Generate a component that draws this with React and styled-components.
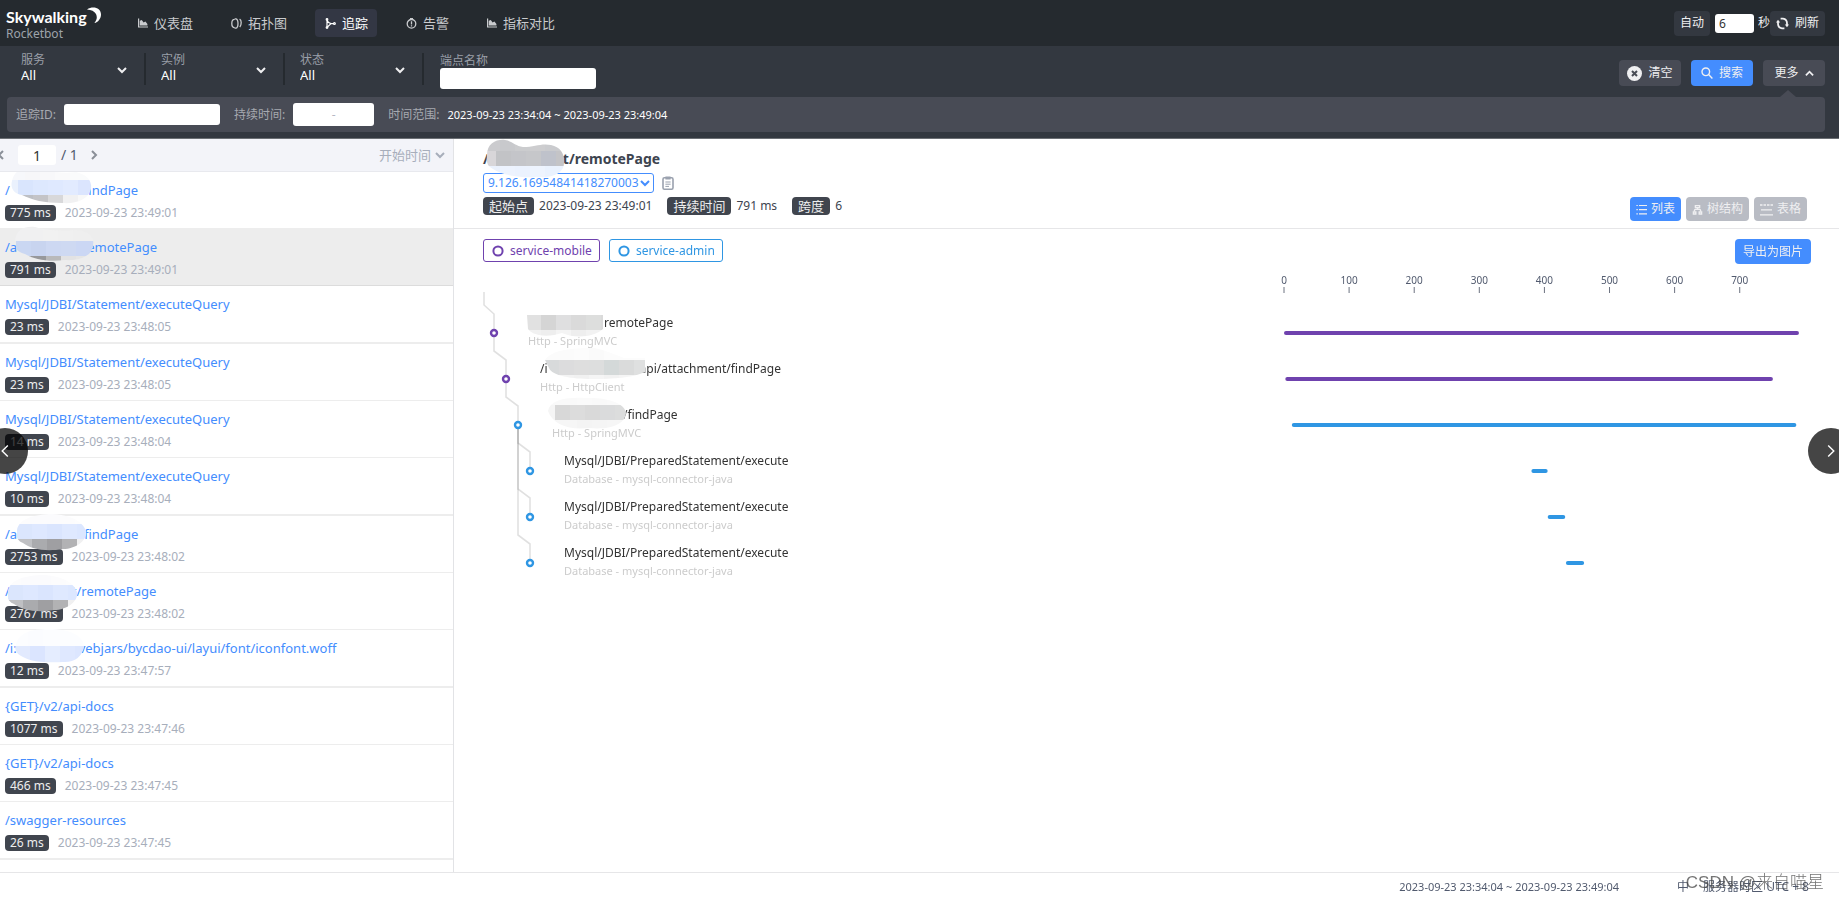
import { useState } from "react";
import styled, { createGlobalStyle, css } from "styled-components";

const GlobalStyle = createGlobalStyle`
  * {
    box-sizing: border-box;
  }

  body {
    margin: 0;
    background: #fff;
    color: #3d444f;
    font: 12px/18px "Noto Sans", "Noto Sans CJK SC", sans-serif;
  }

  button, input, select {
    margin: 0;
    padding: 0;
    border: 0;
    outline: 0;
    font: inherit;
    color: inherit;
  }

  button {
    cursor: pointer;
  }

  a {
    color: inherit;
    text-decoration: none;
  }
`;

const Page = styled.div`
  display: flex;
  flex-direction: column;
  height: 100vh;
  overflow: hidden;
`;

const Icon = styled.svg`
  display: block;
  flex: none;
  width: ${(props) => props.$size || 12}px;
  height: ${(props) => props.$size || 12}px;
`;

/* header */

const Header = styled.header`
  display: flex;
  flex: none;
  align-items: center;
  height: 46px;
  padding: 0 14px 0 6px;
  background-color: #252a2f;
  color: #efeff1;
`;

const Brand = styled.a`
  display: flex;
  flex-direction: column;
  width: 122px;

  & .name {
    display: flex;
    align-items: flex-start;
    font: bold 16px/20px Lato, sans-serif;
    color: #fff;
  }

  & .sub {
    font-size: 12px;
    line-height: 13px;
    color: #9da3aa;
  }
`;

const Nav = styled.nav`
  display: flex;
  flex: 1;
  gap: 19px;
`;

const NavLink = styled.a`
  display: flex;
  align-items: center;
  gap: 6px;
  height: 28px;
  padding: 0 9px 0 10px;
  border-radius: 4px;
  font-size: 13px;
  color: ${(props) => (props.$active ? "#fff" : "#c9cbce")};
  background-color: ${(props) => (props.$active ? "#333744" : "transparent")};
`;

const Refresh = styled.div`
  display: flex;
  align-items: center;
  font-size: 12px;

  & label {
    display: flex;
    align-items: center;
    gap: 4px;
    margin-left: 5px;
  }

  & input {
    width: 39px;
    height: 19px;
    padding: 0 4px;
    border-radius: 3px;
    background: #fff;
    color: #333;
  }
`;

const Button = styled.button`
  display: flex;
  align-items: center;
  justify-content: center;
  gap: 6px;
  height: 26px;
  padding: 0 8px;
  border-radius: 4px;
  font-size: 12px;
  color: #efeff1;
  background-color: #484b55;

  ${(props) =>
    props.$dark &&
    css`
      height: 25px;
      padding: 0 6px;
      background-color: #333840;
    `}

  ${(props) =>
    props.$primary &&
    css`
      background-color: #448dfe;
    `}
`;

/* search conditions */

const Conditions = styled.section`
  flex: none;
  padding: 7px 14px 6px 7px;
  border-bottom: 1px solid #6b6f74;
  background-color: #333840;
  color: #efeff1;
`;

const ConditionRow = styled.div`
  display: flex;
  align-items: flex-start;
`;

const SelectField = styled.label`
  position: relative;
  display: flex;
  flex-direction: column;
  width: 139px;
  height: 32px;
  padding-left: 14px;
  border-right: 2px solid #252a2f;
  line-height: 14px;
  color: #9a9fa8;

  & + & {
    padding-left: 15px;
  }

  & select {
    appearance: none;
    width: 100%;
    height: 17px;
    background: none;
    font-size: 13px;
    line-height: 17px;
    color: #fff;
  }

  & svg {
    position: absolute;
    top: 12px;
    right: 17px;
    color: #efeff1;
    pointer-events: none;
  }
`;

const EndpointField = styled.label`
  display: flex;
  flex: 1;
  flex-direction: column;
  align-items: flex-start;
  padding-left: 16px;
  line-height: 15px;
  color: #9a9fa8;
`;

const TextBox = styled.input`
  width: 156px;
  height: 21px;
  padding: 0 6px;
  border-radius: 3px;
  background: #fff;
  color: #333;
`;

const Actions = styled.div`
  display: flex;
  gap: 10px;
  padding-top: 7px;

  & ${Button} {
    width: 62px;
  }
`;

const MorePanel = styled.div`
  position: relative;
  display: flex;
  align-items: center;
  height: 35px;
  margin-top: 8px;
  padding: 0 9px;
  border-radius: 4px;
  background-color: #484b55;
  color: #a6a9b0;

  &::before {
    content: "";
    position: absolute;
    top: -7px;
    right: 29px;
    border: solid transparent;
    border-width: 0 8px 7px;
    border-bottom-color: #484b55;
  }

  & label,
  & .range {
    display: flex;
    align-items: center;
    gap: 8px;
    margin-right: 14px;
  }

  & time {
    font-size: 11px;
    color: #fff;
  }
`;

const Duration = styled.span`
  display: flex;
  align-items: center;
  width: 81px;
  height: 23px;
  border-radius: 3px;
  background: #fff;
  color: #b5b8c4;

  & input {
    flex: 1;
    min-width: 0;
    padding: 0 4px;
    background: none;
    color: #333;
  }
`;

/* trace list */

const Main = styled.main`
  display: flex;
  flex: 1;
  min-height: 0;
`;

const Aside = styled.aside`
  display: flex;
  flex: none;
  flex-direction: column;
  width: 454px;
  border-right: 1px solid #e2e3e6;
`;

const Pager = styled.div`
  display: flex;
  flex: none;
  align-items: center;
  justify-content: space-between;
  height: 33px;
  padding-right: 8px;
  border-bottom: 1px solid #e8e9ee;
  background-color: #f3f4f9;
  color: #515a6e;
  font-size: 13px;

  & .pages {
    display: flex;
    align-items: center;
    gap: 5px;
    font-size: 14px;
  }

  & button {
    display: flex;
    width: 12px;
    background: none;
    color: #8a8f98;
  }

  & .prev {
    width: 17px;
    margin-left: -4px;
  }

  & .next {
    margin-left: 6px;
  }

  & input {
    width: 38px;
    height: 20px;
    border-radius: 3px;
    background: #fff;
    text-align: center;
    color: #333;
  }
`;

const SortField = styled.label`
  display: flex;
  align-items: center;
  gap: 3px;
  color: #a7aebb;

  & select {
    appearance: none;
    background: none;
  }
`;

const TraceList = styled.ul`
  flex: 1;
  min-height: 0;
  margin: 0;
  padding: 0;
  overflow-y: auto;
  scrollbar-width: none;
  list-style: none;
`;

const TraceItem = styled.li`
  padding: 8px 5px 7px;
  border-bottom: 1px solid ${(props) => (props.$active ? "#dcdcdc" : "#ededed")};
  background-color: ${(props) => (props.$active ? "#ededed" : "#fff")};

  &:nth-child(3n) {
    border-bottom-width: 2px;
  }
`;

const TraceName = styled.a`
  display: flex;
  height: 25px;
  font-size: 13px;
  line-height: 20px;
  color: #448dfe;
`;

const TraceMeta = styled.div`
  display: flex;
  align-items: center;
  gap: 9px;
  height: 16px;
  color: #a7aebb;
`;

const Tag = styled.span`
  padding: 0 5px;
  border-radius: 4px;
  line-height: 16px;
  color: #eee;
  background-color: #40454e;

  ${(props) =>
    props.$large &&
    css`
      padding: 0 6px;
      font-size: 13px;
      line-height: 18px;
    `}
`;

const Hidden = styled.span`
  position: relative;
  flex: none;
  width: ${(props) => props.$width}px;

  & svg {
    position: absolute;
    z-index: 1;
    top: ${(props) => props.$top}px;
    left: ${(props) => props.$left}px;
  }
`;

/* trace detail */

const Detail = styled.section`
  flex: 1;
  min-width: 0;
`;

const DetailHeader = styled.div`
  display: flex;
  align-items: flex-end;
  justify-content: space-between;
  padding: 10px 32px 7px 29px;
  border-bottom: 1px solid #e6e6e8;
`;

const DetailTitle = styled.h1`
  display: flex;
  margin: 0;
  font-size: 14px;
  font-weight: bold;
  line-height: 20px;
`;

const TraceIdRow = styled.div`
  display: flex;
  align-items: center;
  gap: 7px;
  margin: 4px 0;
`;

const TraceIdSelect = styled.label`
  position: relative;
  display: flex;

  & select {
    appearance: none;
    height: 20px;
    padding: 0 14px 0 4px;
    border: 1px solid #448dfe;
    border-radius: 3px;
    background: #fff;
    color: #448dfe;
  }

  & svg {
    position: absolute;
    top: 5px;
    right: 4px;
    pointer-events: none;
    color: #448dfe;
  }
`;

const Facts = styled.div`
  display: flex;
  gap: 15px;
  margin-bottom: 6px;

  & > div {
    display: flex;
    gap: 5px;
  }
`;

const Views = styled.div`
  display: flex;
  gap: 5px;
`;

const ViewButton = styled(Button)`
  gap: 4px;
  height: 24px;
  padding: 0 6px;
  background-color: ${(props) => (props.$active ? "#448dfe" : "#b9bcc4")};
`;

const Legend = styled.div`
  display: flex;
  gap: 9px;
  padding: 10px 28px 0 29px;

  & .export {
    height: 25px;
    margin-left: auto;
  }
`;

const ServiceChip = styled.span`
  display: flex;
  align-items: center;
  gap: 6px;
  height: 23px;
  padding: 0 7px 0 8px;
  border: 1px solid;
  border-radius: 3px;
  color: ${(props) => props.$color};
`;

const Chart = styled.div`
  position: relative;
  display: grid;
  grid-template-columns: 14fr 9fr;
  padding: 0 40px 0 29px;
`;

const TreeLines = styled.svg`
  position: absolute;
  top: 0;
  left: 29px;
  width: 60px;
  height: 330px;
`;

const SpanList = styled.ol`
  margin: 0;
  padding: 46px 0 0;
  list-style: none;
`;

const SpanItem = styled.li`
  height: 46px;
  padding-top: 4px;
  padding-left: ${(props) => 45 + props.$depth * 12}px;

  & .label {
    display: flex;
    color: #333;
  }

  & .layer {
    font-size: 11px;
    color: #ccc;
  }
`;

const Timeline = styled.svg`
  display: block;
  width: 100%;
  height: 330px;
  overflow: visible;
  font-size: 10px;
  fill: #515a6e;
`;

const Footer = styled.footer`
  display: flex;
  flex: none;
  align-items: center;
  justify-content: flex-end;
  height: 28px;
  padding-right: 30px;
  border-top: 1px solid #e6e6e8;
  color: #515a6e;

  & time {
    font-size: 11px;
  }

  & .lang {
    margin: 0 14px 0 58px;
    background: none;
  }
`;

const Watermark = styled.div`
  position: fixed;
  right: 15px;
  bottom: 8px;
  font-family: "Liberation Sans", "Noto Sans CJK SC", sans-serif;
  font-size: 17px;
  font-weight: 300;
  color: rgba(70, 70, 70, 0.75);
  pointer-events: none;
`;

const SlideButton = styled.button`
  position: fixed;
  z-index: 2;
  top: 50%;
  ${(props) => (props.$side === "left" ? "left: -18px" : "right: -15px")};
  display: flex;
  align-items: center;
  justify-content: center;
  width: 46px;
  height: 46px;
  margin-top: -22px;
  border-radius: 50%;
  background-color: rgba(0, 0, 0, 0.73);
  color: #fff;
`;

const PURPLE = "#6f42ae";
const BLUE = "#2f96e3";
const ROW = 46;
const TOTAL = 791;

// Each cover is a blob outline over horizontal bands of 15px tiles.
const covers = {
  light: {
    width: 82,
    height: 37,
    shape: "M2 14C4 4 12 0 22 1C38 4 52 7 66 5C78 8 82 14 81 22C78 33 66 37 52 36C34 36 22 33 12 28C4 27 0 21 2 14Z",
    bands: [
      [0, 13, 0, ["#f7f8fb", "#f7f7f9", "#f8f8fa", "#fafafb", "#fafbfc", "#fafbfc"]],
      [13, 15, 0, ["#eaf1fd"], 8],
      [13, 15, 8, ["#d9e5fd", "#dde8fe", "#dfe9ff", "#e2ebff", "#dbe5fe"]],
      [28, 9, 8, ["#bdbfc4", "#c4c4c7", "#d8d8da", "#f1f1f2", "#f8f8f8"]],
    ],
  },
  active: {
    width: 82,
    height: 36,
    shape: "M2 14C4 3 12 0 22 1C34 5 50 5 62 4C74 4 82 10 80 19C80 30 66 35 52 34C36 36 22 34 12 28C4 26 1 22 2 14Z",
    bands: [
      [0, 15, 0, ["#f0f0f1", "#f0f0f1", "#f1f1f1", "#f0f0f0", "#efefef", "#efefef"]],
      [15, 15, 3, ["#cad7f2", "#c8d4ef", "#cdd8f2", "#ced9f2", "#cbd7f4", "#ccd8f4"]],
      [30, 6, 3, ["#a7a8ac", "#97989b", "#b9b9ba", "#e2e2e3", "#e5e5e5", "#e5e5e5"]],
    ],
  },
  dim: {
    width: 74,
    height: 38,
    shape: "M2 17C4 6 18 2 34 1C54 1 68 8 71 18C73 26 62 36 48 36C30 39 16 36 8 30C2 28 0 22 2 17Z",
    bands: [
      [0, 11, 0, ["#fcfcfd", "#fbfbfd", "#fbfbfd", "#fcfcfd", "#fdfdfd"]],
      [11, 15, 2, ["#dbe6fd", "#dee8ff", "#dae5fe", "#dfe9ff", "#dce7ff"]],
      [26, 12, 2, ["#bfc0c3", "#aaabae", "#9f9fa2", "#b2b2b4", "#f0f0f1"]],
    ],
  },
  pale: {
    width: 74,
    height: 34,
    shape: "M3 15C6 4 18 0 36 0C56 0 70 6 71 17C70 28 60 34 50 33C36 34 18 33 10 28C3 25 1 20 3 15Z",
    bands: [
      [0, 17, 0, ["#fcfdff", "#fbfcff", "#fcfdff", "#fcfdff", "#fcfdff"]],
      [17, 17, 2, ["#e2eafe", "#dbe5ff", "#e5edff", "#dfe8ff", "#dce6ff"]],
    ],
  },
  title: {
    width: 80,
    height: 40,
    shape: "M2 16C2 4 12 0 20 1C27 2 30 7 38 8C50 8 56 4 66 6C76 8 80 16 79 24C79 34 68 39 54 38C38 39 18 37 8 30C2 27 1 22 2 16Z",
    bands: [
      [0, 12, 0, ["#cbcbce", "#c8c9cc", "#cbccce", "#cdcdcf", "#cacbce", "#cacbce"]],
      [12, 15, 11, ["#c2c3c6", "#c4c5c9", "#c6c7ca", "#bfc2cb", "#c4c4c7"]],
      [12, 15, 0, ["#d8d6d9"], 11],
      [27, 13, 0, ["#eaf1fd", "#edf3fe", "#ebf2fe", "#eef4fe", "#eaf2fe", "#ecf3ff"]],
    ],
  },
  gray: {
    width: 78,
    height: 22,
    shape: "M1 0H77V14C68 22 50 24 36 18C24 22 8 22 2 14Z",
    bands: [
      [0, 15, 0, ["#e1e1e1", "#d5d5d5", "#dfdfe0", "#dadada", "#dddedd", "#dadada"]],
      [15, 7, 0, ["#f1f1f1", "#eeeeee", "#f4f4f4", "#eeeeee", "#f2f2f2", "#f5f5f5"]],
    ],
  },
  wide: {
    width: 102,
    height: 32,
    shape: "M1 12C8 2 26 0 50 0C60 2 70 6 80 10H101V24C88 30 70 31 48 31C28 31 8 28 5 20Z",
    bands: [
      [0, 12, 0, ["#fbfbfb", "#fbfbfb", "#fcfcfc", "#fafafa", "#fcfcfc", "#fcfcfc", "#fcfcfc"]],
      [12, 15, 0, ["#d8dadb", "#dcdcdd", "#dedede", "#dddede", "#d4d9d9", "#dadbdb", "#dfe0e0"]],
      [27, 5, 0, ["#f3f3f3", "#f3f3f3", "#f1f1f1", "#f5f5f5", "#f2f2f2", "#f5f5f5", "#f5f5f5"]],
    ],
  },
  soft: {
    width: 80,
    height: 33,
    shape: "M1 14C3 4 16 0 38 1C60 0 78 6 79 16C78 28 62 33 42 31C22 33 6 28 1 14Z",
    bands: [
      [0, 8, 0, ["#f9f9f9", "#f9f9f9", "#fafafa", "#f9f9f9", "#fafafa", "#fafafa"]],
      [8, 15, 0, ["#f5f5f5"], 8],
      [8, 15, 8, ["#d8d8d8", "#dcdcdc", "#d9d9d9", "#dadbdc", "#dcdddd"]],
      [23, 10, 0, ["#f6f6f6", "#f6f6f6", "#f4f4f4", "#f5f5f5", "#f6f6f6", "#f7f7f7"]],
    ],
  },
};

const traces = [
  { start: "/", end: "findPage", cover: "light", gap: 74, top: -13, left: 0, ms: 775, time: "23:49:01" },
  { start: "/a", end: "emotePage", cover: "active", gap: 70, top: -11, left: -4, ms: 791, time: "23:49:01", active: true },
  { start: "Mysql/JDBI/Statement/executeQuery", ms: 23, time: "23:48:05" },
  { start: "Mysql/JDBI/Statement/executeQuery", ms: 23, time: "23:48:05" },
  { start: "Mysql/JDBI/Statement/executeQuery", ms: 14, time: "23:48:04" },
  { start: "Mysql/JDBI/Statement/executeQuery", ms: 10, time: "23:48:04" },
  { start: "/a", end: "/findPage", cover: "dim", gap: 62, top: -11, left: -2, ms: 2753, time: "23:48:02" },
  { start: "/", end: "t/remotePage", cover: "dim", gap: 62, top: -7, left: -4, ms: 2767, time: "23:48:02" },
  { start: "/i:", end: "vebjars/bycdao-ui/layui/font/iconfont.woff", cover: "pale", gap: 62, top: -9, left: -4, ms: 12, time: "23:47:57" },
  { start: "{GET}/v2/api-docs", ms: 1077, time: "23:47:46" },
  { start: "{GET}/v2/api-docs", ms: 466, time: "23:47:45" },
  { start: "/swagger-resources", ms: 26, time: "23:47:45" },
  { start: "/swagger-resources", ms: 18, time: "23:47:45" },
];

const spans = [
  { end: "remotePage", cover: "gray", gap: 76, top: 1, left: -2, layer: "Http - SpringMVC", depth: 0, parent: -1, from: 0, to: 791, color: PURPLE },
  { start: "/i", end: "api/attachment/findPage", cover: "wide", gap: 92, top: -12, left: -4, layer: "Http - HttpClient", depth: 1, parent: 0, from: 2, to: 751, color: PURPLE },
  { end: "/findPage", cover: "soft", gap: 71, top: -9, left: -5, layer: "Http - SpringMVC", depth: 2, parent: 1, from: 12, to: 787, color: BLUE },
  { start: "Mysql/JDBI/PreparedStatement/execute", layer: "Database - mysql-connector-java", depth: 3, parent: 2, from: 380, to: 405, color: BLUE },
  { start: "Mysql/JDBI/PreparedStatement/execute", layer: "Database - mysql-connector-java", depth: 3, parent: 2, from: 405, to: 432, color: BLUE },
  { start: "Mysql/JDBI/PreparedStatement/execute", layer: "Database - mysql-connector-java", depth: 3, parent: 2, from: 433, to: 461, color: BLUE },
];

const Chevron = ({ dir = "down", size = 10, width = 2 }) => {
  const paths = {
    down: "M1 3L5 7L9 3",
    up: "M1 7L5 3L9 7",
    left: "M7 1L3 5L7 9",
    right: "M3 1L7 5L3 9",
  };
  return (
    <Icon $size={size} viewBox="0 0 10 10" fill="none" stroke="currentColor" strokeWidth={width} aria-hidden="true">
      <path d={paths[dir]} />
    </Icon>
  );
};

const ChartIcon = () => (
  <Icon $size={10} viewBox="0 0 10 10" fill="currentColor" aria-hidden="true">
    <path d="M0 .6H1.2V8.4H10V9.6H0ZM1.8 7.6V2.8L3.8 2L5.6 4.4L7.4 3.6L9.4 6V7.6Z" />
  </Icon>
);

const TopologyIcon = () => (
  <Icon $size={11} viewBox="0 0 11 11" fill="none" stroke="currentColor" strokeWidth="1.3" aria-hidden="true">
    <path d="M3.6 1.4Q.8 1.4 .8 5.5Q.8 9.6 3.6 9.6M3.6 .8H5Q7 1.4 7 5.5Q7 9.6 5 10.2H3.6M8.6 1.2Q10.2 2 10.2 4.6Q10.2 7.4 8.8 9" />
  </Icon>
);

const TraceIcon = () => (
  <Icon $size={11} viewBox="0 0 11 11" fill="none" stroke="currentColor" strokeWidth="1.2" aria-hidden="true">
    <path d="M2 1.6V9.4M2.4 9L6 5.6M2.2 2.4Q3 5 6 5.6H8.6" />
    <circle cx="2" cy="1.4" r=".8" />
    <circle cx="2" cy="9.6" r=".8" />
    <circle cx="9.4" cy="5.6" r=".9" />
  </Icon>
);

const AlarmIcon = () => (
  <Icon $size={11} viewBox="0 0 11 11" fill="none" stroke="currentColor" strokeWidth="1.3" aria-hidden="true">
    <circle cx="5.5" cy="5.8" r="4.3" />
    <path d="M5.5 3.2V6.4M5.5 7.3V8.5M4 .7H7" />
  </Icon>
);

const ReloadIcon = () => (
  <Icon $size={13} viewBox="0 0 13 13" fill="none" stroke="currentColor" strokeWidth="1.8" aria-hidden="true">
    <path d="M4.6 1.7H7Q11 2.2 11 6.5V8M8.4 11.3H6Q2 10.8 2 6.5V5" />
    <path d="M8.8 7.4H13L11 10.2ZM0 5.6H4.2L2 2.8Z" fill="currentColor" stroke="none" />
  </Icon>
);

const ClearIcon = () => (
  <Icon $size={15} viewBox="0 0 15 15" aria-hidden="true">
    <circle cx="7.5" cy="7.5" r="7.5" fill="#efeff1" />
    <path d="M5 5L10 10M10 5L5 10" stroke="#484b55" strokeWidth="2" />
  </Icon>
);

const SearchIcon = () => (
  <Icon $size={12} viewBox="0 0 12 12" fill="none" stroke="currentColor" strokeWidth="1.4" aria-hidden="true">
    <circle cx="4.8" cy="4.8" r="3.8" />
    <path d="M7.6 7.6L11.4 11.4" />
  </Icon>
);

const ClipboardIcon = () => (
  <Icon $size={14} viewBox="0 0 14 14" fill="none" stroke="#9aa1ae" strokeWidth="1.6" aria-hidden="true">
    <rect x="2" y="1.8" width="10" height="11.4" rx="1.4" />
    <path d="M4.4 2H9.6" strokeWidth="3" />
    <path d="M4.4 6H9.6M4.4 8.2H9.6M4.4 10.4H8" strokeWidth="1" />
  </Icon>
);

const ListIcon = () => (
  <Icon $size={11} viewBox="0 0 11 11" fill="none" stroke="currentColor" strokeWidth="1.2" aria-hidden="true">
    <path d="M3 1.5H11M3 5.7H11M3 9.9H11M.4 1.5H1.8M.4 5.7H1.8M.4 9.9H1.8" />
  </Icon>
);

const TreeIcon = () => (
  <Icon $size={11} viewBox="0 0 11 11" fill="none" stroke="currentColor" strokeWidth="1.4" aria-hidden="true">
    <path d="M3.4 1.6H7.6V3.6H3.4ZM5.5 4V5.6M2.4 7.6V6.4Q2.4 5.4 3.6 5.4H7.4Q8.6 5.4 8.6 6.4V7.6" />
    <path d="M1.4 8H3.8V10H1.4ZM7.2 8H9.6V10H7.2Z" />
  </Icon>
);

const TableIcon = () => (
  <Icon $size={13} viewBox="0 0 13 13" fill="none" stroke="currentColor" strokeWidth="1.3" aria-hidden="true">
    <path d="M0 2H13" strokeDasharray="2.5 1" />
    <path d="M1 6.8H12M0 11.8H13" />
  </Icon>
);

const MoonIcon = () => (
  <Icon $size={18} viewBox="0 0 18 18" fill="#fff" aria-hidden="true">
    <path d="M0 2.4C6-1.6 14 .8 14 7.4C14 11.6 11 15.2 7.4 16C10 13 10.4 10 9 7C7.4 4 4.4 2.6 0 2.4Z" />
  </Icon>
);

const navItems = [
  { label: "仪表盘", icon: <ChartIcon /> },
  { label: "拓扑图", icon: <TopologyIcon /> },
  { label: "追踪", icon: <TraceIcon />, active: true },
  { label: "告警", icon: <AlarmIcon /> },
  { label: "指标对比", icon: <ChartIcon /> },
];

const Cover = ({ id, name }) => {
  const { width, height, shape, bands } = covers[name];
  return (
    <svg width={width} height={height} aria-hidden="true">
      <clipPath id={id}>
        <path d={shape} />
      </clipPath>
      <g clipPath={`url(#${id})`} shapeRendering="crispEdges">
        {bands.map(([y, h, x, colors, tile = 15], b) =>
          colors.map((color, i) => (
            <rect key={`${b}-${i}`} x={x + i * 15} y={y} width={tile} height={h} fill={color} />
          ))
        )}
      </g>
    </svg>
  );
};

const MaskedName = ({ id, item }) => (
  <>
    {item.start}
    {item.cover && (
      <Hidden $width={item.gap} $top={item.top} $left={item.left}>
        <Cover id={id} name={item.cover} />
      </Hidden>
    )}
    {item.end}
  </>
);

const TopBar = () => {
  const [seconds, setSeconds] = useState("6");

  return (
    <Header>
      <Brand href="#">
        <span className="name">
          Skywalking
          <MoonIcon />
        </span>
        <span className="sub">Rocketbot</span>
      </Brand>
      <Nav>
        {navItems.map((n) => (
          <NavLink href="#" key={n.label} $active={n.active}>
            {n.icon}
            {n.label}
          </NavLink>
        ))}
      </Nav>
      <Refresh>
        <Button $dark>自动</Button>
        <label>
          <input aria-label="自动刷新间隔" value={seconds} onChange={(e) => setSeconds(e.target.value)} />秒
        </label>
        <Button $dark>
          <ReloadIcon />
          刷新
        </Button>
      </Refresh>
    </Header>
  );
};

const SearchBar = () => (
  <Conditions>
    <ConditionRow>
      {["服务", "实例", "状态"].map((label) => (
        <SelectField key={label}>
          {label}
          <select>
            <option>All</option>
          </select>
          <Chevron />
        </SelectField>
      ))}
      <EndpointField>
        端点名称
        <TextBox />
      </EndpointField>
      <Actions>
        <Button>
          <ClearIcon />
          清空
        </Button>
        <Button $primary>
          <SearchIcon />
          搜索
        </Button>
        <Button>
          更多
          <Chevron dir="up" size={9} />
        </Button>
      </Actions>
    </ConditionRow>
    <MorePanel>
      <label>
        追踪ID:
        <TextBox />
      </label>
      <label>
        持续时间:
        <Duration>
          <input aria-label="最小持续时间" />-<input aria-label="最大持续时间" />
        </Duration>
      </label>
      <div className="range">
        时间范围:
        <time>2023-09-23 23:34:04 ~ 2023-09-23 23:49:04</time>
      </div>
    </MorePanel>
  </Conditions>
);

const Traces = () => {
  const [page, setPage] = useState("1");

  return (
    <Aside>
      <Pager>
        <div className="pages">
          <button className="prev" aria-label="上一页">
            <Chevron dir="left" />
          </button>
          <input aria-label="页码" value={page} onChange={(e) => setPage(e.target.value)} />
          <span>/ 1</span>
          <button className="next" aria-label="下一页">
            <Chevron dir="right" />
          </button>
        </div>
        <SortField>
          <select aria-label="排序">
            <option>开始时间</option>
          </select>
          <Chevron />
        </SortField>
      </Pager>
      <TraceList>
        {traces.map((t, i) => (
          <TraceItem key={i} $active={t.active}>
            <TraceName href="#">
              <MaskedName id={`trace-${i}`} item={t} />
            </TraceName>
            <TraceMeta>
              <Tag>{t.ms} ms</Tag>
              <time>2023-09-23 {t.time}</time>
            </TraceMeta>
          </TraceItem>
        ))}
      </TraceList>
    </Aside>
  );
};

const SpanChart = () => {
  const centerX = (s) => 11 + s.depth * 12;
  const centerY = (i) => 69 + i * ROW;

  return (
    <Chart>
      <TreeLines aria-hidden="true">
        {spans.map((s, i) => {
          const x = s.parent < 0 ? 1 : centerX(spans[s.parent]);
          const y = s.parent < 0 ? 28 : centerY(s.parent);
          return (
            <path
              key={i}
              d={`M${x} ${y}V${centerY(i) - 28}L${centerX(s)} ${centerY(i) - 19}V${centerY(i)}`}
              fill="none"
              stroke="rgba(0, 0, 0, 0.12)"
              strokeWidth="1.6"
            />
          );
        })}
        {spans.map((s, i) => (
          <circle key={i} cx={centerX(s)} cy={centerY(i)} r="3" fill="#fff" stroke={s.color} strokeWidth="2.4" />
        ))}
      </TreeLines>
      <SpanList>
        {spans.map((s, i) => (
          <SpanItem key={i} $depth={s.depth}>
            <div className="label">
              <MaskedName id={`span-${i}`} item={s} />
            </div>
            <div className="layer">{s.layer}</div>
          </SpanItem>
        ))}
      </SpanList>
      <Timeline>
        {[0, 100, 200, 300, 400, 500, 600, 700].map((tick) => {
          const x = `${(tick / TOTAL) * 100}%`;
          return (
            <g key={tick}>
              <text x={x} y="20" textAnchor="middle">
                {tick}
              </text>
              <line x1={x} x2={x} y1="23" y2="29" stroke="#6c7280" />
            </g>
          );
        })}
        {spans.map((s, i) => (
          <rect
            key={i}
            x={`${(s.from / TOTAL) * 100}%`}
            y={centerY(i) - 2}
            width={`${((s.to - s.from) / TOTAL) * 100}%`}
            height="4"
            rx="2"
            fill={s.color}
          />
        ))}
      </Timeline>
    </Chart>
  );
};

const TraceDetail = () => (
  <Detail>
    <DetailHeader>
      <div>
        <DetailTitle>
          <MaskedName id="title" item={{ start: "/", end: "t/remotePage", cover: "title", gap: 74, top: -10, left: -4 }} />
        </DetailTitle>
        <TraceIdRow>
          <TraceIdSelect>
            <select aria-label="追踪ID">
              <option>9.126.16954841418270003</option>
            </select>
            <Chevron />
          </TraceIdSelect>
          <ClipboardIcon />
        </TraceIdRow>
        <Facts>
          <div>
            <Tag $large>起始点</Tag>
            <span>2023-09-23 23:49:01</span>
          </div>
          <div>
            <Tag $large>持续时间</Tag>
            <span>791 ms</span>
          </div>
          <div>
            <Tag $large>跨度</Tag>
            <span>6</span>
          </div>
        </Facts>
      </div>
      <Views>
        <ViewButton $active>
          <ListIcon />
          列表
        </ViewButton>
        <ViewButton>
          <TreeIcon />
          树结构
        </ViewButton>
        <ViewButton>
          <TableIcon />
          表格
        </ViewButton>
      </Views>
    </DetailHeader>
    <Legend>
      {[
        ["service-mobile", PURPLE],
        ["service-admin", BLUE],
      ].map(([name, color]) => (
        <ServiceChip key={name} $color={color}>
          <Icon $size={12} viewBox="0 0 12 12" fill="none" stroke="currentColor" strokeWidth="2" aria-hidden="true">
            <circle cx="6" cy="6" r="4.6" />
          </Icon>
          {name}
        </ServiceChip>
      ))}
      <Button $primary className="export">
        导出为图片
      </Button>
    </Legend>
    <SpanChart />
  </Detail>
);

const App = () => {
  return (
    <Page>
      <GlobalStyle />
      <TopBar />
      <SearchBar />
      <Main>
        <Traces />
        <TraceDetail />
      </Main>
      <Footer>
        <time>2023-09-23 23:34:04 ~ 2023-09-23 23:49:04</time>
        <button className="lang">中</button>
        <span>服务器时区 UTC + 8</span>
      </Footer>
      <Watermark>CSDN @来自喵星</Watermark>
      <SlideButton $side="left" aria-label="上一张">
        <Chevron dir="left" size={14} width={1} />
      </SlideButton>
      <SlideButton $side="right" aria-label="下一张">
        <Chevron dir="right" size={14} width={1} />
      </SlideButton>
    </Page>
  );
};

export default App;
